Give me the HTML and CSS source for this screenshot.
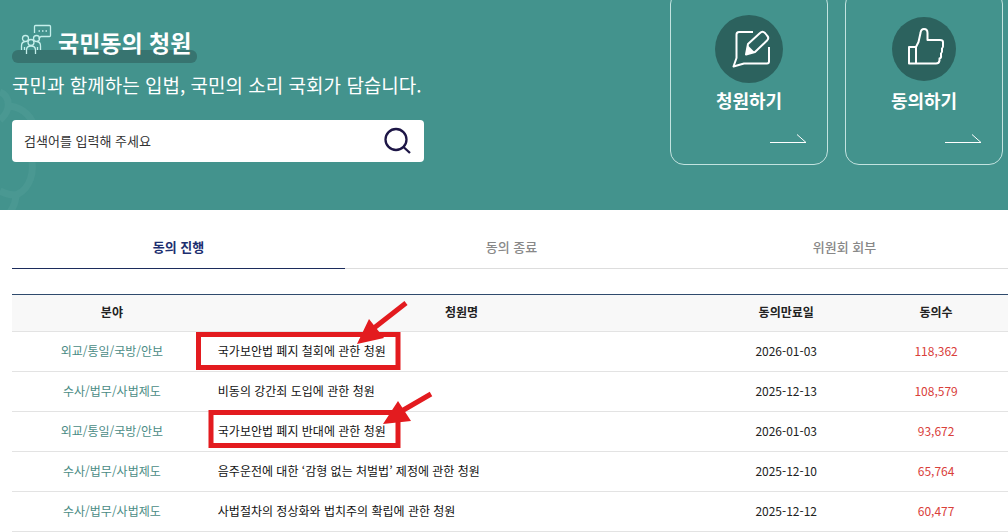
FILE: index.html
```html
<!DOCTYPE html>
<html lang="ko">
<head>
    <meta charset="UTF-8">
    <meta name="viewport" content="width=device-width, initial-scale=1">
    <title>국민동의 청원</title>
    <link rel="stylesheet" href="styles.css">
</head>
<body>
    <header class="hero">
        <svg class="hero-deco" width="42" height="130" viewBox="0 0 42 130" aria-hidden="true">
            <path d="M0 8C10 12 12 26 0 36M10 22C24 24 34 34 35 48"/>
            <path d="M31 72C35 88 30 104 18 110C12 112 6 110 0 107M16 110C16 118 13 124 10 128"/>
        </svg>

        <div class="intro">
            <h1 class="title">
                <svg class="title-icon" width="32" height="32" viewBox="0 0 32 32" aria-hidden="true">
                    <path d="M14.500 9V2.500Q14.500 1.500 15.500 1.500H29.500Q30.500 1.500 30.500 2.500V11.500Q30.500 12.500 29.500 12.500H21L18.500 14.500"/>
                    <path d="M18.500 7H20M22 7H23.500M25.500 7H27"/>
                    <circle cx="5.500" cy="14.500" r="3"/>
                    <circle cx="16.500" cy="14.500" r="3"/>
                    <circle cx="11" cy="18.500" r="3"/>
                    <path d="M1.500 26V22Q1.500 18 5 17.500M20.500 26V22Q20.500 18 17 17.500M6.500 30V26Q6.500 22 11 22T15.500 26V30M4.500 26V23M17.500 26V23"/>
                </svg>
                <span>국민동의 청원</span>
            </h1>
            <p class="slogan">국민과 함께하는 입법, 국민의 소리 국회가 담습니다.</p>
            <form class="search">
                <input type="text" name="keyword" placeholder="검색어를 입력해 주세요" aria-label="검색어">
                <button type="submit" aria-label="검색">
                    <svg width="28" height="28" viewBox="0 0 28 28" aria-hidden="true">
                        <circle cx="12" cy="12.500" r="10.500"/>
                        <path d="M19.500 20L26 26"/>
                    </svg>
                </button>
            </form>
        </div>

        <div class="cards">
            <a class="card" href="#">
                <svg class="card-icon" width="68" height="68" viewBox="0 0 68 68" aria-hidden="true">
                    <circle class="disc" cx="34" cy="34" r="34"/>
                    <path d="M38 17H24Q21.500 17 21.500 19.500V43L18.500 51.500L29 48.500H52Q54 48.500 54 46.500V32"/>
                    <path d="M33 29L45 18Q47.500 15.500 50 18L52 20.500Q54.500 23 52 25.500L40 37L31 39.500Z"/>
                    <path class="nib" d="M32.500 30L39.500 37L31 39.500Z"/>
                </svg>
                <span class="card-label">청원하기</span>
                <svg class="card-arrow" width="37" height="10" viewBox="0 0 37 10" aria-hidden="true">
                    <path d="M0 8.500H36L27 0.500"/>
                </svg>
            </a>
            <a class="card" href="#">
                <svg class="card-icon" width="68" height="68" viewBox="0 0 68 68" aria-hidden="true">
                    <circle class="disc" cx="34" cy="34" r="32"/>
                    <path d="M19 32H26V48.500H19ZM26 48.500H46Q49 48.500 49.500 45.500V43.500Q51.500 43 51 40.500V38.500Q52.500 37.500 52 35V33.500Q53.500 32.500 53 30V27Q53 25 50 25H37.500V18Q37.500 14 34 14Q31 14 30.500 18L28.500 27L26 32"/>
                </svg>
                <span class="card-label">동의하기</span>
                <svg class="card-arrow" width="37" height="10" viewBox="0 0 37 10" aria-hidden="true">
                    <path d="M0 8.500H36L27 0.500"/>
                </svg>
            </a>
        </div>
    </header>

    <main class="petitions">
        <nav class="tabs">
            <a class="tab active" href="#">동의 진행</a>
            <a class="tab" href="#">동의 종료</a>
            <a class="tab" href="#">위원회 회부</a>
        </nav>

        <div class="list">
            <table class="petition-table">
                <thead>
                    <tr>
                        <th class="col-field">분야</th>
                        <th class="col-name">청원명</th>
                        <th class="col-date">동의만료일</th>
                        <th class="col-count">동의수</th>
                    </tr>
                </thead>
                <tbody>
                    <tr>
                        <td class="field">외교/통일/국방/안보</td>
                        <td class="name"><a href="#">국가보안법 폐지 철회에 관한 청원</a></td>
                        <td>2026-01-03</td>
                        <td class="count">118,362</td>
                    </tr>
                    <tr>
                        <td class="field">수사/법무/사법제도</td>
                        <td class="name"><a href="#">비동의 강간죄 도입에 관한 청원</a></td>
                        <td>2025-12-13</td>
                        <td class="count">108,579</td>
                    </tr>
                    <tr>
                        <td class="field">외교/통일/국방/안보</td>
                        <td class="name"><a href="#">국가보안법 폐지 반대에 관한 청원</a></td>
                        <td>2026-01-03</td>
                        <td class="count">93,672</td>
                    </tr>
                    <tr>
                        <td class="field">수사/법무/사법제도</td>
                        <td class="name"><a href="#">음주운전에 대한 ‘감형 없는 처벌법’ 제정에 관한 청원</a></td>
                        <td>2025-12-10</td>
                        <td class="count">65,764</td>
                    </tr>
                    <tr>
                        <td class="field">수사/법무/사법제도</td>
                        <td class="name"><a href="#">사법절차의 정상화와 법치주의 확립에 관한 청원</a></td>
                        <td>2025-12-12</td>
                        <td class="count">60,477</td>
                    </tr>
                </tbody>
            </table>

            <!-- red boxes and arrows over the two security law petitions -->
            <svg class="marks" width="260" height="160" viewBox="0 0 260 160" aria-hidden="true">
                <rect x="6.500" y="40.500" width="199.500" height="33"/>
                <rect x="19" y="118.500" width="187" height="33"/>
                <path d="M182 34L214 9M208 118L239 100"/>
                <path class="head" d="M165 50L177 25L192 44ZM191 130L206 107L219 127Z"/>
            </svg>
        </div>
    </main>
</body>
</html>
```
FILE: styles.css
```css
* {
    box-sizing: border-box;
}
body {
    font-family: "Noto Sans CJK KR", "Noto Sans", sans-serif;
    font-size: 12px;
    margin: 0;
    color: #222;
    background: #fff;
    overflow-x: hidden;
}
a {
    color: inherit;
    text-decoration: none;
}

/* top banner */
.hero {
    position: relative;
    display: flex;
    justify-content: space-between;
    align-items: flex-start;
    height: 210px;
    padding: 0 5px 0 12px;
    background: #43938d;
    color: #fff;
    overflow: hidden;
}
.hero-deco {
    position: absolute;
    left: 0;
    top: 84px;
    fill: none;
    stroke: #4a9892;
    stroke-width: 7;
}
.intro {
    position: relative;
    width: 412px;
    padding-top: 24px;
}
.title {
    position: relative;
    display: inline-flex;
    align-items: flex-start;
    gap: 6px;
    height: 39px;
    margin: 0;
    padding: 0 6px 0 8px;
    font-size: 23px;
    line-height: 36px;
}
.title::before {
    content: "";
    position: absolute;
    left: 0;
    right: 0;
    bottom: 0;
    height: 13px;
    border-radius: 6px;
    background: #377470;
}
.title svg, .title span {
    position: relative;
}
.title-icon {
    fill: none;
    stroke: #c5efeb;
    stroke-width: 1.3;
}
.slogan {
    margin: 8px 0 21px;
    font-size: 19px;
    line-height: 28px;
    white-space: nowrap;
}
.search {
    display: flex;
    align-items: center;
    height: 42px;
    padding: 0 12px;
    background: #fff;
    border-radius: 4px;
}
.search input {
    flex: 1;
    min-width: 0;
    padding: 0 0 2px;
    border: none;
    outline: none;
    background: none;
    font-family: inherit;
    font-size: 13px;
    color: #333;
}
.search input::placeholder {
    color: #333;
    opacity: 1;
}
.search button {
    display: flex;
    padding: 0;
    border: none;
    background: none;
    cursor: pointer;
}
.search svg {
    fill: none;
    stroke: #1d1646;
    stroke-width: 2.3;
}

.cards {
    display: flex;
    gap: 17px;
    margin-top: -10px;
}
.card {
    display: flex;
    flex-direction: column;
    align-items: center;
    width: 158px;
    height: 175px;
    padding: 24px 20px 0;
    border: 1px solid #c3e3e0;
    border-radius: 14px;
}
.card-icon {
    fill: none;
    stroke: #fff;
    stroke-width: 2;
    stroke-linejoin: round;
}
.card-icon .disc {
    fill: #2c625e;
    stroke: none;
}
.card-icon .nib {
    fill: #fff;
    stroke: none;
}
.card-label {
    margin-top: 3px;
    font-size: 18px;
    font-weight: bold;
    line-height: 28px;
}
.card-arrow {
    align-self: flex-end;
    margin-top: 20px;
    fill: none;
    stroke: #fff;
    stroke-width: 1;
}

/* petition list */
.petitions {
    margin-right: -3px;
    padding: 16px 0 0 12px;
}
.tabs {
    display: flex;
}
.tab {
    flex: 1;
    height: 43px;
    border-bottom: 1px solid #ddd;
    color: #888;
    font-size: 13px;
    font-weight: 500;
    line-height: 42px;
    text-align: center;
}
.tab.active {
    border-bottom-color: #1c2c5c;
    color: #1d2f70;
    font-weight: bold;
}
.list {
    position: relative;
    margin-top: 25px;
}
.petition-table {
    width: 100%;
    border-top: 1px solid #2f4a6d;
    border-collapse: separate;
    border-spacing: 0;
    table-layout: fixed;
}
.petition-table th {
    height: 37px;
    padding: 0 0 3px;
    border-bottom: 1px solid #e3e3e3;
    background: #f8f8f8;
}
.petition-table td {
    height: 40px;
    padding: 0 0 2px;
    border-bottom: 1px solid #e3e3e3;
    text-align: center;
}
.col-field {
    width: 20%;
}
.col-name {
    width: 50%;
}
.col-date, .col-count {
    width: 15%;
}
.petition-table .field {
    color: #4b8c85;
}
.petition-table .name {
    padding-left: 6px;
    color: #111;
    text-align: left;
}
.petition-table .count {
    color: #d9403a;
}
.marks {
    position: absolute;
    left: 180px;
    top: 0;
    fill: none;
    stroke: #e31b1f;
    stroke-width: 5;
    pointer-events: none;
}
.marks .head {
    fill: #e31b1f;
    stroke: none;
}
```
